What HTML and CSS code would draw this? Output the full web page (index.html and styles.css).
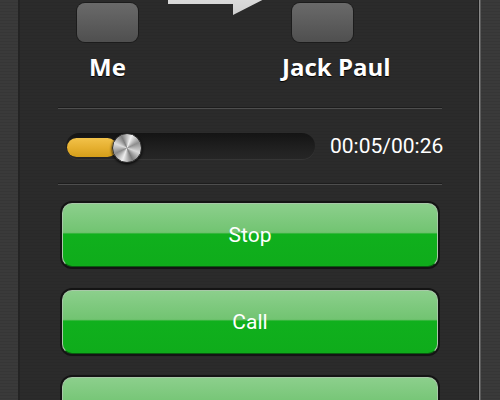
FILE: index.html
```html
<!DOCTYPE html>
<html>
<head>
<meta charset="utf-8">
<link rel="stylesheet" href="styles.css">
</head>
<body>
<div class="frame">
  <div class="side side-left"></div>
  <div class="panel">
    <div class="users">
      <div class="user user-me">
        <div class="avatar"></div>
        <div class="name">Me</div>
      </div>
      <svg class="arrow" width="110" height="16" viewBox="0 0 110 16">
        <defs>
          <linearGradient id="ag" x1="0" y1="0" x2="0" y2="1">
            <stop offset="0" stop-color="#f2f2f2"/>
            <stop offset="1" stop-color="#cfcfcf"/>
          </linearGradient>
        </defs>
        <polygon fill="url(#ag)" points="0,-20 65,-20 65,-31 110,-8 65,15 65,4 0,4"/>
      </svg>
      <div class="user user-other">
        <div class="avatar"></div>
        <div class="name">Jack Paul</div>
      </div>
    </div>
    <div class="divider"></div>
    <div class="progress-row">
      <div class="track">
        <div class="fill"></div>
        <div class="knob"></div>
      </div>
      <div class="time">00:05/00:26</div>
    </div>
    <div class="divider divider-low"></div>
    <div class="buttons">
      <div class="btn">Stop</div>
      <div class="btn">Call</div>
      <div class="btn"></div>
    </div>
  </div>
  <div class="edge"></div>
  <div class="side side-right"></div>
</div>
</body>
</html>
```
FILE: styles.css
```css
html, body {
  margin: 0;
  padding: 0;
}
body {
  width: 500px;
  height: 400px;
  overflow: hidden;
  background: #383838;
  font-family: "Open Sans", "Liberation Sans", sans-serif;
}
.frame {
  display: flex;
  height: 400px;
}
.side {
  background: repeating-linear-gradient(180deg, #3a3a3a 0 2px, #363636 2px 3px);
}
.side-left {
  width: 18px;
  border-right: 2px solid #242424;
}
.side-right {
  width: 19px;
}
.edge {
  width: 3px;
  background: linear-gradient(90deg, #1e1e1e 0 1px, #8a8a8a 1px 2px, #5a5a5a 2px 3px);
}
.panel {
  width: 458px;
  background: repeating-linear-gradient(180deg, #2b2b2b 0 2px, #292929 2px 3px);
  padding: 0 36px 0 38px;
  box-sizing: border-box;
  display: flex;
  flex-direction: column;
  overflow: hidden;
}
.panel > * {
  flex: none;
}
.users {
  display: flex;
  align-items: flex-start;
  padding-top: 3px;
  padding-left: 19px;
  height: 79px;
}
.user {
  display: flex;
  flex-direction: column;
}
.user-me {
  width: 61px;
  align-items: center;
}
.user-other {
  width: 106px;
  margin-left: 4px;
}
.user-other .avatar {
  margin-left: 10px;
}
.avatar {
  width: 61px;
  height: 39px;
  border-radius: 8px;
  background: linear-gradient(180deg, #6a6a6a, #4f4f4f);
  box-shadow: 0 0 0 1px #1c1c1c;
}
.name {
  margin-top: 10px;
  font-size: 24px;
  line-height: 30px;
  font-weight: 700;
  color: #ffffff;
  white-space: nowrap;
  text-align: center;
  text-shadow: 0 1px 1px #000;
}
.user-me .name {
  width: 80px;
}
.arrow {
  margin-top: -3px;
  margin-left: 30px;
  overflow: visible;
}
.divider {
  margin-top: 25px;
  height: 1px;
  border-top: 1px solid #1d1d1d;
  background: #4e4e4e;
}
.divider-low {
  margin-top: 0;
}
.progress-row {
  height: 74px;
  display: flex;
  align-items: center;
  padding-left: 8px;
}
.track {
  width: 249px;
  height: 26px;
  flex: none;
  border-radius: 13px;
  background: linear-gradient(180deg, #141414, #202020 60%, #262626);
  box-shadow: 0 1px 0 #353535;
  display: flex;
  align-items: center;
  padding-left: 1px;
  box-sizing: border-box;
}
.fill {
  width: 50px;
  height: 19px;
  flex: none;
  margin-top: 3px;
  border-radius: 10px;
  background: linear-gradient(180deg, #f2c24a, #e6b030 50%, #d49e1a);
}
.knob {
  width: 30px;
  height: 30px;
  flex: none;
  margin-left: -5px;
  margin-top: 4px;
  border-radius: 50%;
  box-sizing: border-box;
  border: 1px solid #2a2a2a;
  background: conic-gradient(from 20deg, #f0f0f0, #8e8e8e, #d8d8d8, #7a7a7a, #eeeeee, #8a8a8a, #dddddd, #7e7e7e, #f0f0f0);
  box-shadow: 0 1px 3px #000;
}
.time {
  margin-left: 15px;
  font-family: Roboto, "Liberation Sans", sans-serif;
  font-size: 21px;
  color: #ffffff;
  white-space: nowrap;
}
.buttons {
  display: flex;
  flex-direction: column;
  gap: 23px;
  padding: 18px 4px 0 4px;
}
.btn {
  height: 64px;
  flex: none;
  box-sizing: border-box;
  border-radius: 10px;
  border: 1px solid #a8c8a8;
  border-bottom-color: #0a5a10;
  box-shadow: 0 0 0 2px #141414;
  background: linear-gradient(180deg, #8ccf8c 0%, #72c472 45%, #66bf66 47%, #10b01d 48%, #0fac1b 100%);
  color: #ffffff;
  font-family: Roboto, "Liberation Sans", sans-serif;
  font-size: 21px;
  display: flex;
  align-items: center;
  justify-content: center;
}
```
